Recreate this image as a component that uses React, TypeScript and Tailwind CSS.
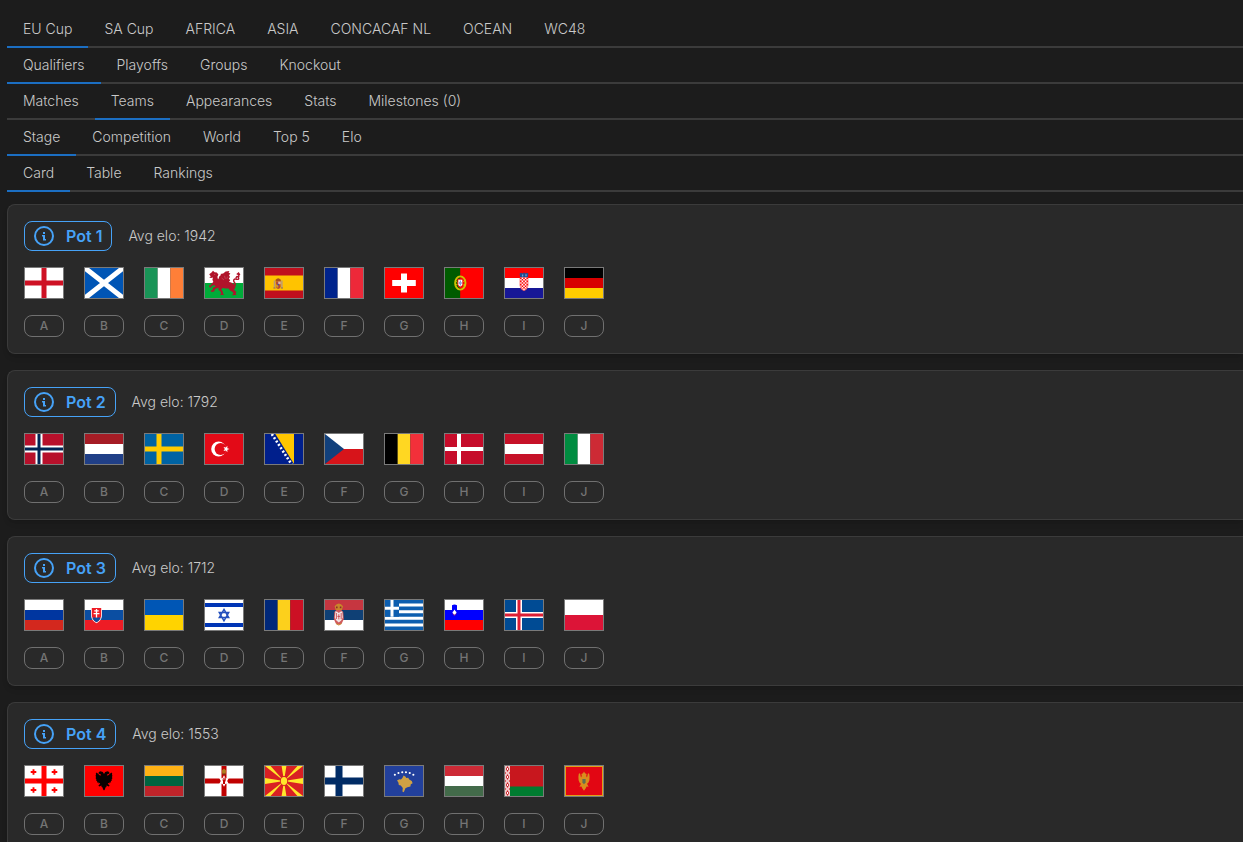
import { useState } from "react";
import type { ReactNode } from "react";

type TabRow = {
  label: string;
  tabs: string[];
  initial: string;
};

type Team = {
  name: string;
  flag: ReactNode;
};

type Pot = {
  name: string;
  avgElo: number;
  teams: Team[];
};

const GROUPS = ["A", "B", "C", "D", "E", "F", "G", "H", "I", "J"];

const TAB_ROWS: TabRow[] = [
  {
    label: "Tournament",
    tabs: ["EU Cup", "SA Cup", "AFRICA", "ASIA", "CONCACAF NL", "OCEAN", "WC48"],
    initial: "EU Cup",
  },
  {
    label: "Stage",
    tabs: ["Qualifiers", "Playoffs", "Groups", "Knockout"],
    initial: "Qualifiers",
  },
  {
    label: "Section",
    tabs: ["Matches", "Teams", "Appearances", "Stats", "Milestones (0)"],
    initial: "Teams",
  },
  {
    label: "Scope",
    tabs: ["Stage", "Competition", "World", "Top 5", "Elo"],
    initial: "Stage",
  },
  { label: "View", tabs: ["Card", "Table", "Rankings"], initial: "Card" },
];

// All flags are drawn on a 38x30 canvas.
function Bands({ colors, vertical }: { colors: string[]; vertical?: boolean }) {
  const w = 38 / colors.length;
  const h = 30 / colors.length;
  return (
    <>
      {colors.map((c, i) =>
        vertical ? (
          <rect key={i} x={i * w} width={w} height="30" fill={c} />
        ) : (
          <rect key={i} y={i * h} width="38" height={h} fill={c} />
        )
      )}
    </>
  );
}

function Cross({
  bg,
  color,
  x = 19,
  y = 15,
  size = 5,
  inner,
  innerSize = 2,
}: {
  bg: string;
  color: string;
  x?: number;
  y?: number;
  size?: number;
  inner?: string;
  innerSize?: number;
}) {
  return (
    <>
      <rect width="38" height="30" fill={bg} />
      <path d={`M${x} 0V30M0 ${y}H38`} stroke={color} strokeWidth={size} />
      {inner ? (
        <path d={`M${x} 0V30M0 ${y}H38`} stroke={inner} strokeWidth={innerSize} />
      ) : null}
    </>
  );
}

const wales = (
  <>
    <Bands colors={["#fff", "#00ab39"]} />
    {/* head and neck */}
    <path
      fill="#b0142b"
      d="M4.200 6.200L6.500 4.600 8 2.800l1.600 1.400 2.200.4 1.600 2-1 2.200.4 2 1.800 1-2 3.400-3.800-.4-1.400-3 .6-2.400-2 .6-1.800-.6 1.600-1z"
    />
    {/* wings */}
    <path
      fill="#b0142b"
      d="M12.800 13l1.400-4.400 2-1.800-1-.8 3-.6 2.400-1.800L24.400 3l-.8 1.800 1.800.6-1.400 1.800 1 1.800-1.200 1.400 1.400 1.800-1.400 2-4 2.400-5.400.6z"
    />
    {/* body and legs */}
    <path
      fill="#b0142b"
      d="M9.800 12.600l6-.2 5.400.8 5 1.200 3.200 2.200 1 3-1.400 2.200 2.400 2.200-.8 1.800 1 1.200-4.600.2 1.400-1.600-.8-1.600-2.600-1.400-1.400-2.200-3 .2-3-.6-1.400 1.400 1.600 2 .2 2.200 1.400 1.200-4.400.2 1.200-1.600-.6-1.800-2-1.600-.2-2.200-3.400 1.200-.8 2.600-2.800.4-.8-1.600 1.800-.2.400-2.400 2.600-1.400-.6-1.200-3 .6-.8 1.600-1.600-.2-.4-2 1.400.4.800-1.600z"
    />
    {/* tail */}
    <path
      d="M28.500 19.500q3-2.500 1-5t.6-3.600q4.600 1.400 3.400-1.200t-2.600.400M33 9.500q1.600-1.500.4-3.500M31.800 6.600l1.800-1.600 1.200 2"
      stroke="#b0142b"
      strokeWidth="1.400"
      fill="none"
    />
    <path
      d="M16.600 10l2.400 2M19.500 7.800l.8 3M22.600 8.600l-.8 2.200M9 6.500h1.200"
      stroke="#fff"
      strokeOpacity=".3"
      strokeWidth=".6"
      fill="none"
    />
  </>
);

const spain = (
  <>
    <rect width="38" height="30" fill="#c00f1d" />
    <rect y="7.500" width="38" height="15" fill="#ffc300" />
    <path d="M8.800 12.500h1.400V20H8.800zM16.200 12.500h1.400V20h-1.400z" fill="#b79a7c" />
    <path d="M8.400 19.400h2.200v1.200H8.400zM15.800 19.400H18v1.200h-2.200z" fill="#8d6a5c" />
    <path d="M10.600 11.800q2.600-3.200 5.200 0v1.600h-5.200z" fill="#a8501f" />
    <path d="M10.800 13.600h4.800v4.800q-.2 2.400-2.400 2.600-2.200-.2-2.400-2.600z" fill="#b5473a" />
    <path d="M13.200 13.600h2.400v2.600h-2.400z" fill="#d8b7b3" />
    <path d="M10.800 16.400h2.400v3h-1.800z" fill="#d99a1a" />
    <circle cx="13.200" cy="16.600" r=".9" fill="#3a4fa3" />
  </>
);

const portugal = (
  <>
    <rect width="38" height="30" fill="#f00" />
    <rect width="15.200" height="30" fill="#005b00" />
    <ellipse cx="15.300" cy="15" rx="5.200" ry="6.600" fill="none" stroke="#cfc000" strokeWidth="1.900" />
    <path
      d="M10.200 12.400q5 5.600 10.400 4.400M10 16.600q6 .4 10.400-4.600"
      stroke="#e0d000"
      strokeWidth=".8"
      fill="none"
    />
    <path d="M12.400 10.800h5.800v5.600q-.4 3-2.900 3.600-2.500-.6-2.900-3.600z" fill="#f01010" />
    <path d="M13.300 11.800h4v4.400q-.2 2-2 2.400-1.800-.4-2-2.400z" fill="#fff" />
    <path d="M15.300 12.600v5.200M13.800 15h3" stroke="#3b58b5" strokeWidth="1" strokeDasharray="1.200 .6" />
  </>
);

const croatia = (
  <>
    <Bands colors={["#f00", "#fff", "#171796"]} />
    <path d="M14.600 5.600l1.800-.8 1 .8 1.600-1.200 1.600 1.200 1-.8 1.800.8-.6 4h-7.600z" fill="#244c8f" />
    <path d="M17 6.400h1.200v2H17zM20.400 6.200h1.200v2h-1.200z" fill="#6fa6da" />
    <path d="M15 9.400h8v8.200q-.4 4-4 5.200-3.600-1.200-4-5.200z" fill="#fff" />
    <path
      fill="#f00"
      d="M15 9.400h1.600V11H15zM18.200 9.400h1.600V11h-1.600zM21.400 9.400H23V11h-1.600zM16.600 11h1.600v1.600h-1.600zM19.800 11h1.600v1.600h-1.600zM15 12.600h1.600v1.600H15zM18.200 12.600h1.600v1.600h-1.600zM21.400 12.600H23v1.600h-1.600zM16.600 14.200h1.600v1.600h-1.600zM19.800 14.200h1.600v1.600h-1.600zM15 15.800h1.600v1.600H15zM18.200 15.800h1.600v1.600h-1.600zM21.400 15.800H23v1.600h-1.600zM16.600 17.400h1.600V19h-1.600zM19.800 17.400h1.600V19h-1.600zM15.600 19h1v1.600zM18.200 19h1.600v1.600h-1.600zM21.400 19h1l-1 1.600zM16.600 20.600h1.600V22zM19.800 20.600h1.600l-1.600 1.600z"
    />
    <path
      d="M15 9.400v8.200q.4 4 4 5.200 3.600-1.200 4-5.200V9.400"
      fill="none"
      stroke="#f33"
      strokeWidth=".6"
    />
  </>
);

const turkey = (
  <>
    <rect width="38" height="30" fill="#e30a17" />
    <circle cx="13.600" cy="15" r="7.400" fill="#fff" />
    <circle cx="15.600" cy="15" r="6" fill="#e30a17" />
    <path
      d="M24.600 15l-2.300.8.1 2.500-1.600-1.900-2.300.7 1.300-2.100-1.300-2.100 2.300.7 1.600-1.900-.1 2.500z"
      fill="#fff"
    />
  </>
);

const bosnia = (
  <>
    <rect width="38" height="30" fill="#001f8c" />
    <path d="M10.400 0H29v30z" fill="#ffc600" />
    <path d="M6.800 0L27 31" stroke="#fff" strokeWidth="2.600" strokeDasharray="2 2" />
  </>
);

const czechia = (
  <>
    <Bands colors={["#fff", "#d7141a"]} />
    <path d="M0 0l19 15L0 30z" fill="#11407c" />
  </>
);

const slovakia = (
  <>
    <Bands colors={["#fff", "#0b4ea2", "#ee1c25"]} />
    <path d="M6 7.200h11v8q-.4 5.600-5.500 8-5.100-2.400-5.500-8z" fill="#fff" />
    <path d="M6.800 8h9.400v7.200q-.4 4.800-4.700 7-4.300-2.200-4.700-7z" fill="#ee1c25" />
    <path
      d="M7.500 18.300q1.600-2 2.800-.4 1.200-1.600 2.400 0 1.400-1.600 2.800.4-1.400 2.600-4 4-2.600-1.400-4-4z"
      fill="#0b4ea2"
    />
    <path d="M11.500 9v8.400M9.300 10.800h4.400M8.600 13.600h5.800" stroke="#fff" strokeWidth="1.300" />
  </>
);

const israel = (
  <>
    <rect width="38" height="30" fill="#fff" />
    <path d="M0 5H38M0 25H38" stroke="#0035b5" strokeWidth="4.200" />
    <path
      d="M19 9.400l4.700 8.200h-9.400zM19 20.800l-4.700-8.200h9.400z"
      fill="none"
      stroke="#2450bd"
      strokeWidth="1.500"
    />
  </>
);

const serbia = (
  <>
    <Bands colors={["#c63640", "#0f4075", "#fff"]} />
    <path d="M9.600 6.200l2-2 2.200-.6 2.200.6 2 2-1.200 4h-6z" fill="#c9862a" />
    <path d="M11 6.600h1.600v1.600H11zM14.800 6.600h1.600v1.600h-1.600z" fill="#8f2b2b" />
    <path d="M9.400 12l2-2h4.800l2 2 .6 7-2 4.400-3 1.400-3-1.400-2-4.400z" fill="#cf5a5c" />
    <path
      d="M10.400 11.200l1.800.6 1.600 1.200 1.600-1.200 1.800-.6.6 6.400-1.600 3-2.400 2-2.400-2-1.600-3z"
      fill="#f1e4e4"
    />
    <path d="M12.400 16.400h2.800M13.800 14.200v5.200M11.400 13v6M16.200 13v6" stroke="#c63640" strokeWidth=".8" />
    <path d="M11 23.600l2.800 1.400 2.800-1.400" stroke="#c9862a" strokeWidth="1" fill="none" />
  </>
);

const greece = (
  <>
    <rect width="38" height="30" fill="#0d5eaf" />
    <path d="M0 5H38M0 11.700H38M0 18.300H38M0 25H38" stroke="#fff" strokeWidth="3" />
    <rect width="14" height="16.700" fill="#0d5eaf" />
    <path d="M7 0V16.700M0 8.300H14" stroke="#fff" strokeWidth="3" />
  </>
);

const slovenia = (
  <>
    <Bands colors={["#fff", "#00f", "#f00"]} />
    <path d="M7 5.200q2.500-1.400 5 0v5.600q-.4 3-2.500 4.200Q7.400 13.800 7 10.800z" fill="#00f" />
    <path
      d="M7.400 12.200l1.200-1.200.9-1.400.9 1.400 1.200 1.200q-.6 1.800-2.100 2.600-1.500-.8-2.100-2.600z"
      fill="#fff"
    />
    <path d="M7.800 13.600q.6 1.200 1.700 1.800 1.100-.6 1.700-1.800" stroke="#f33" strokeWidth=".6" fill="none" />
  </>
);

const georgia = (
  <>
    <Cross bg="#fff" color="#f00" size={5} />
    <path
      d="M8.500 3.200v5.600M5.700 6h5.600M29.500 3.200v5.600M26.700 6h5.600M8.500 21.200v5.600M5.700 24h5.600M29.500 21.200v5.600M26.700 24h5.600"
      stroke="#f00"
      strokeWidth="1.900"
    />
  </>
);

const albania = (
  <>
    <rect width="38" height="30" fill="#f00" />
    <path
      fill="#0a0000"
      d="M19 8l-1.200-2-2.400-.8-2 1 .8.800-1 .8 2 .200 1 1.200-1.200.4-3.400-3.200-.8 1 .2 1.200-.4 1.200.4 1.200-.4 1.200.8 1-.4 1.200 1.200.6-.2 1.400 1.400-.2.2 1.200 1.200-.4.4.8-1.800 1.800.8.800 2.200-1 .2 1.600 1 .4.400 1.800 1 1.200 1-1.200.4-1.800 1-.4.2-1.600 2.200 1 .8-.8-1.800-1.800.4-.8 1.200.4.200-1.200 1.400.2-.2-1.400 1.200-.6-.4-1.200.8-1-.4-1.200.4-1.200-.4-1.200.2-1.200-.8-1-3.400 3.200-1.200-.4 1-1.200 2-.2-1-.8.800-.8-2-1-2.400.8z"
    />
  </>
);

const northernIreland = (
  <>
    <Cross bg="#fff" color="#c00000" size={5} />
    <path
      d="M19 9.200l1.600 3 3.200-.2-1.600 3 1.600 3-3.200-.2-1.600 3-1.600-3-3.200.2 1.600-3-1.600-3 3.200.2z"
      fill="#fff"
    />
    <path
      d="M18 18v-3l-.8-1.400.6-.2.4.8v-2.400h.6v2h.4v-2.400h.6v2.400l.6-2 .5.100-.3 3.100-.6 1v2z"
      fill="#c00000"
    />
    <path d="M17 4.600l2-2 2 2-.4 3.800h-3.200z" fill="#b08020" />
    <path d="M17.400 7.600h3.200v1h-3.200z" fill="#6e1515" />
  </>
);

const macedonia = (
  <>
    <rect width="38" height="30" fill="#d92023" />
    <path
      fill="#ffe62b"
      d="M0 0h5.600L19 15zM38 0h-5.600L19 15zM0 30h5.600L19 15zM38 30h-5.600L19 15zM16.600 0h4.800L19 15zM16.600 30h4.800L19 15zM0 12v6l19-3zM38 12v6l-19-3z"
    />
    <ellipse cx="19" cy="15" rx="4" ry="5" fill="#d92023" />
    <ellipse cx="19" cy="15" rx="3.200" ry="4" fill="#ffe62b" />
  </>
);

const kosovo = (
  <>
    <rect width="38" height="30" fill="#22409c" />
    <path
      fill="#cfa144"
      d="M18.600 9.400l2 1.400.6 1.200 2-.2 1 1.600 2.600 1.600.8 2.200-1.800 1-.4 2.200-3 .8-2 1-1.600 4-1.400-.6.400-3.600-2-2.400-2-.6-.4-2.400-1.400-2 2.400-1.400 1.600.2 1.400-1.400z"
    />
    <path
      d="M9.800 8.800h.1M13.400 7h.1M17.200 6.200h.1M20.900 6.200h.1M24.700 7h.1M28.300 8.800h.1"
      stroke="#fff"
      strokeWidth="2"
      strokeLinecap="round"
    />
  </>
);

const belarus = (
  <>
    <rect width="38" height="30" fill="#c8171e" />
    <rect y="20.500" width="38" height="9.500" fill="#007c30" />
    <rect width="5" height="30" fill="#f3c9ca" />
    <path
      d="M2.500 0l1.600 3-1.600 3L.9 3zM2.500 8l1.600 3-1.600 3-1.600-3zM2.500 16l1.600 3-1.600 3-1.600-3zM2.500 24l1.600 3-1.600 3-1.600-3zM0 6l1.200 1L0 8zM5 6L3.800 7 5 8zM0 14l1.200 1L0 16zM5 14l-1.200 1L5 16zM0 22l1.200 1L0 24zM5 22l-1.200 1L5 24z"
      fill="#c8171e"
    />
    <path d="M2.500 2v2M2.500 10v2M2.500 18v2M2.500 26v2" stroke="#fff" strokeWidth="1" />
  </>
);

const montenegro = (
  <>
    <rect width="38" height="30" fill="#e3a019" />
    <rect x="1" y="1" width="36" height="28" fill="#e20613" />
    <path
      fill="#d98e1d"
      d="M19 5.600l1 1.600 1.600.8-.4 2 .8 1.600 1-4.400 1.200.6.4 3-.2 3.400-1.200 2.800-1.200.8 1.600 3-2-.4-1 2.200-1.600 2.200-1.600-2.200-1-2.200-2 .4 1.600-3-1.200-.8-1.200-2.800-.2-3.400.4-3 1.200-.6 1 4.400.8-1.600-.4-2 1.600-.8z"
    />
    <path d="M17.400 13h3.200v3.400L19 18.200l-1.600-1.800z" fill="#5f7052" />
  </>
);

const POTS: Pot[] = [
  {
    name: "Pot 1",
    avgElo: 1942,
    teams: [
      { name: "England", flag: <Cross bg="#fff" color="#ce1124" size={5} /> },
      {
        name: "Scotland",
        flag: (
          <>
            <rect width="38" height="30" fill="#0055b5" />
            <path d="M0 0l38 30M38 0L0 30" stroke="#fff" strokeWidth="5" />
          </>
        ),
      },
      { name: "Ireland", flag: <Bands vertical colors={["#199457", "#fff", "#ff7f38"]} /> },
      { name: "Wales", flag: wales },
      { name: "Spain", flag: spain },
      { name: "France", flag: <Bands vertical colors={["#00238c", "#fff", "#ed2939"]} /> },
      {
        name: "Switzerland",
        flag: (
          <>
            <rect width="38" height="30" fill="#f00" />
            <path d="M19 5.500v19M7.200 15h23.600" stroke="#fff" strokeWidth="6" />
          </>
        ),
      },
      { name: "Portugal", flag: portugal },
      { name: "Croatia", flag: croatia },
      { name: "Germany", flag: <Bands colors={["#000", "#d80000", "#ffcc00"]} /> },
    ],
  },
  {
    name: "Pot 2",
    avgElo: 1792,
    teams: [
      {
        name: "Norway",
        flag: <Cross bg="#b7102b" color="#fff" x={14} size={7} inner="#002455" innerSize={3} />,
      },
      { name: "Netherlands", flag: <Bands colors={["#a51c25", "#fff", "#203f87"]} /> },
      { name: "Sweden", flag: <Cross bg="#0063a3" color="#ffcb00" x={14} size={5} /> },
      { name: "Turkey", flag: turkey },
      { name: "Bosnia and Herzegovina", flag: bosnia },
      { name: "Czechia", flag: czechia },
      { name: "Belgium", flag: <Bands vertical colors={["#000", "#ffd722", "#f2303a"]} /> },
      { name: "Denmark", flag: <Cross bg="#c60c2a" color="#fff" x={14} size={4} /> },
      { name: "Austria", flag: <Bands colors={["#c61128", "#fff", "#c61128"]} /> },
      { name: "Italy", flag: <Bands vertical colors={["#008c40", "#fff", "#cd2a35"]} /> },
    ],
  },
  {
    name: "Pot 3",
    avgElo: 1712,
    teams: [
      { name: "Russia", flag: <Bands colors={["#fff", "#0036a0", "#d3281e"]} /> },
      { name: "Slovakia", flag: slovakia },
      { name: "Ukraine", flag: <Bands colors={["#0056b5", "#ffd300"]} /> },
      { name: "Israel", flag: israel },
      { name: "Romania", flag: <Bands vertical colors={["#00287a", "#fcd01c", "#cc1024"]} /> },
      { name: "Serbia", flag: serbia },
      { name: "Greece", flag: greece },
      { name: "Slovenia", flag: slovenia },
      {
        name: "Iceland",
        flag: <Cross bg="#004b94" color="#fff" x={14} size={6} inner="#dc1e35" innerSize={3} />,
      },
      { name: "Poland", flag: <Bands colors={["#fff", "#dc1437"]} /> },
    ],
  },
  {
    name: "Pot 4",
    avgElo: 1553,
    teams: [
      { name: "Georgia", flag: georgia },
      { name: "Albania", flag: albania },
      { name: "Lithuania", flag: <Bands colors={["#ffb215", "#006440", "#bf242a"]} /> },
      { name: "Northern Ireland", flag: northernIreland },
      { name: "North Macedonia", flag: macedonia },
      { name: "Finland", flag: <Cross bg="#fff" color="#002b65" x={14} size={7} /> },
      { name: "Kosovo", flag: kosovo },
      { name: "Hungary", flag: <Bands colors={["#cd2a36", "#fff", "#436b4a"]} /> },
      { name: "Belarus", flag: belarus },
      { name: "Montenegro", flag: montenegro },
    ],
  },
];

function InfoIcon() {
  return (
    <svg viewBox="0 0 20 20" className="size-5" fill="none" aria-hidden="true">
      <circle cx="10" cy="10" r="9" stroke="currentColor" strokeWidth="2" />
      <rect x="9" y="6" width="2" height="2" fill="currentColor" />
      <path d="M8 9h3v4h1v1.500H9V10.500H8z" fill="currentColor" />
    </svg>
  );
}

function Tabs({ row }: { row: TabRow }) {
  const [active, setActive] = useState(row.initial);

  return (
    <div
      role="tablist"
      aria-label={row.label}
      className="flex h-9 border-b-2 border-[#3b3b3b]"
    >
      {row.tabs.map((tab) => (
        <button
          key={tab}
          type="button"
          role="tab"
          aria-selected={tab === active}
          onClick={() => setActive(tab)}
          className={
            tab === active
              ? "-mb-0.5 border-b-2 border-[#1b6ec2] px-4 text-sm font-light whitespace-nowrap"
              : "-mb-0.5 border-b-2 border-transparent px-4 text-sm font-light whitespace-nowrap"
          }
        >
          {tab}
        </button>
      ))}
    </div>
  );
}

function TeamCell({ team, group }: { team: Team; group: string }) {
  return (
    <li className="flex w-10 flex-col gap-4">
      <svg
        viewBox="0 0 38 30"
        role="img"
        aria-label={team.name}
        className="h-8 w-10 border border-[#7a7a7a]"
      >
        {team.flag}
      </svg>
      <button
        type="button"
        className="flex h-[22px] items-center justify-center rounded-lg border border-[#707070] text-xs font-medium text-[#757575]"
      >
        {group}
      </button>
    </li>
  );
}

function PotCard({ pot }: { pot: Pot }) {
  return (
    <section className="flex flex-col gap-4 rounded-l-lg border border-r-0 border-[#3b3b3b] bg-[#292929] p-4 shadow-md">
      <div className="flex items-center gap-4">
        <button
          type="button"
          className="flex h-[30px] items-center gap-3 rounded-lg border border-[#46a2f7] px-[9px] font-semibold text-[#46a2f7]"
        >
          <InfoIcon />
          {pot.name}
        </button>
        <span className="text-sm font-light">Avg elo: {pot.avgElo}</span>
      </div>
      <ul className="flex flex-wrap gap-5">
        {pot.teams.map((team, i) => (
          <TeamCell key={team.name} team={team} group={GROUPS[i]} />
        ))}
      </ul>
    </section>
  );
}

export default function App() {
  return (
    <main className="min-h-screen bg-[#1c1c1c] pt-3 pb-4 pl-[7px] font-['Inter',sans-serif] text-[#c9c9c9]">
      <nav className="mb-3">
        {TAB_ROWS.map((row) => (
          <Tabs key={row.label} row={row} />
        ))}
      </nav>
      <div className="flex flex-col gap-4">
        {POTS.map((pot) => (
          <PotCard key={pot.name} pot={pot} />
        ))}
      </div>
    </main>
  );
}
